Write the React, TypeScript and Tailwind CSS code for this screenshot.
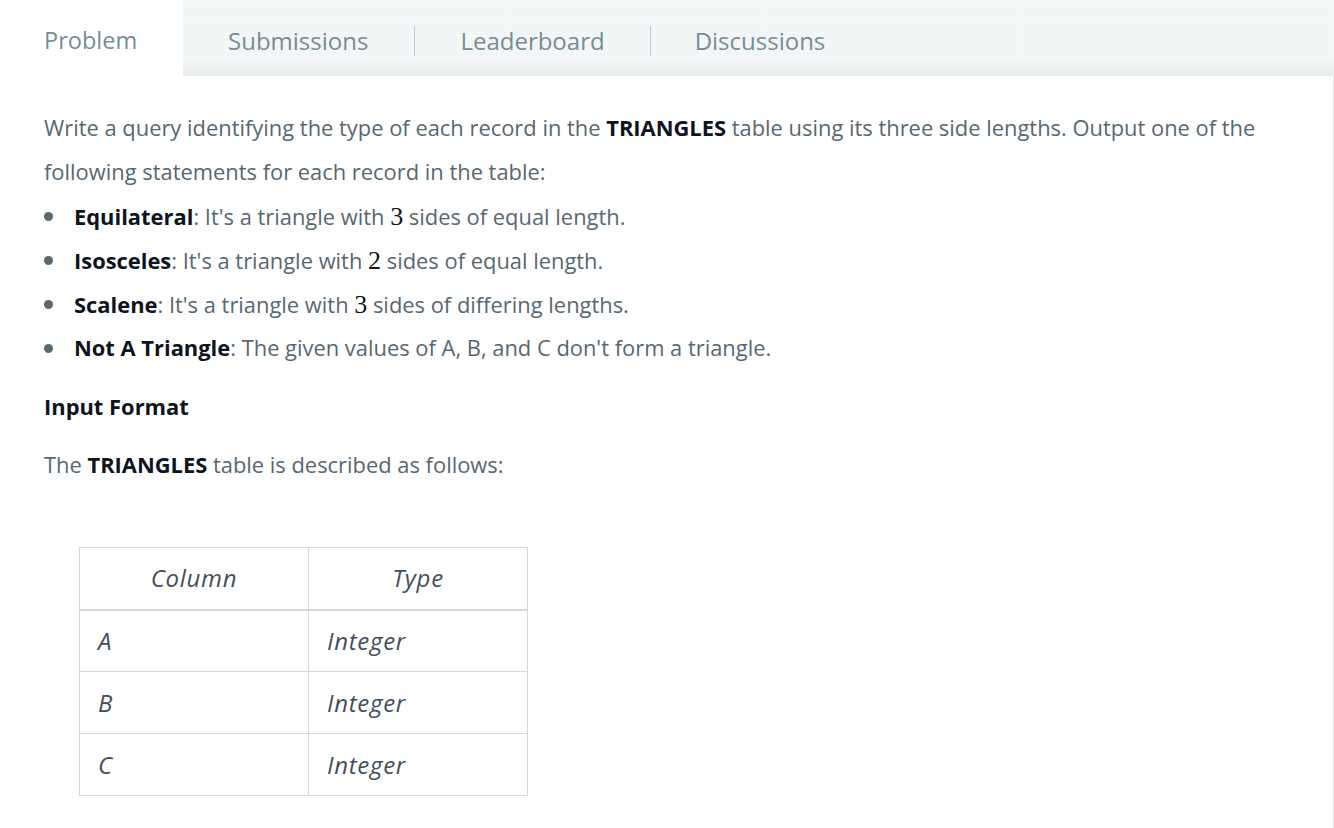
import React from 'react';

const tabs = ['Problem', 'Submissions', 'Leaderboard', 'Discussions'];

const kinds = [
  { name: 'Equilateral', pre: "It's a triangle with ", num: '3', post: ' sides of equal length.' },
  { name: 'Isosceles', pre: "It's a triangle with ", num: '2', post: ' sides of equal length.' },
  { name: 'Scalene', pre: "It's a triangle with ", num: '3', post: ' sides of differing lengths.' },
  { name: 'Not A Triangle', pre: "The given values of A, B, and C don't form a triangle.", num: '', post: '' },
];

const rows = ['A', 'B', 'C'];

export default function App() {
  return (
    <div className="w-[1334px] h-[828px] bg-white overflow-hidden font-['Open_Sans',sans-serif]">
      {/* Tabs */}
      <div className="flex h-[76px] bg-gradient-to-b from-[#f3f6f7] from-75% to-[#e8edee]">
        <div className="w-[183px] bg-white flex items-center pt-[5px] pl-[44px] text-[23.5px] text-[#738f93]">
          {tabs[0]}
        </div>
        <div className="flex items-center pt-[5px] text-[24px] text-[#738f93]">
          <span className="pl-[45px] pr-[46px]">{tabs[1]}</span>
          <span className="h-[30px] w-px bg-[#b8cccf]" />
          <span className="px-[45px]">{tabs[2]}</span>
          <span className="h-[30px] w-px bg-[#b8cccf]" />
          <span className="px-[44px]">{tabs[3]}</span>
        </div>
      </div>

      {/* Body */}
      <div className="h-[752px] border-r border-[#dfe3e6] pl-[44px] pt-[30px] text-[21.9px] text-[#576871]">
        <p className="leading-[44px] pr-[60px]">
          Write a query identifying the type of each record in the{' '}
          <b className="font-bold text-[#0e141e]">TRIANGLES</b> table using its three side lengths. Output one of the
          following statements for each record in the table:
        </p>
        <ul>
          {kinds.map(k => (
            <li key={k.name} className="flex items-center h-[44px]">
              <span className="w-[9px] h-[9px] rounded-full bg-[#576871] mr-[21px]" />
              <span>
                <b className="font-bold text-[#0e141e]">{k.name}</b>: {k.pre}
                {k.num && (
                  <span className="font-['Liberation_Serif',serif] text-[26px] text-[#0e141e]">{k.num}</span>
                )}
                {k.post}
              </span>
            </li>
          ))}
        </ul>

        <h3 className="font-bold text-[#0e141e] mt-[22px] leading-[30px]">Input Format</h3>

        <p className="mt-[28px] leading-[30px]">
          The <b className="font-bold text-[#0e141e]">TRIANGLES</b> table is described as follows:
        </p>

        <table className="mt-[67px] ml-[35px] border-collapse italic text-[24px] tracking-[0.7px] text-[#444f5a]">
          <thead>
            <tr className="h-[62px]">
              <th className="w-[229px] border border-[#d3d7de] border-b-2 font-normal text-center">Column</th>
              <th className="w-[219px] border border-[#d3d7de] border-b-2 font-normal text-center">Type</th>
            </tr>
          </thead>
          <tbody>
            {rows.map(r => (
              <tr key={r} className="h-[62px]">
                <td className="border border-[#d3d7de] pl-[18px]">{r}</td>
                <td className="border border-[#d3d7de] pl-[18px]">Integer</td>
              </tr>
            ))}
          </tbody>
        </table>
      </div>
    </div>
  );
}
